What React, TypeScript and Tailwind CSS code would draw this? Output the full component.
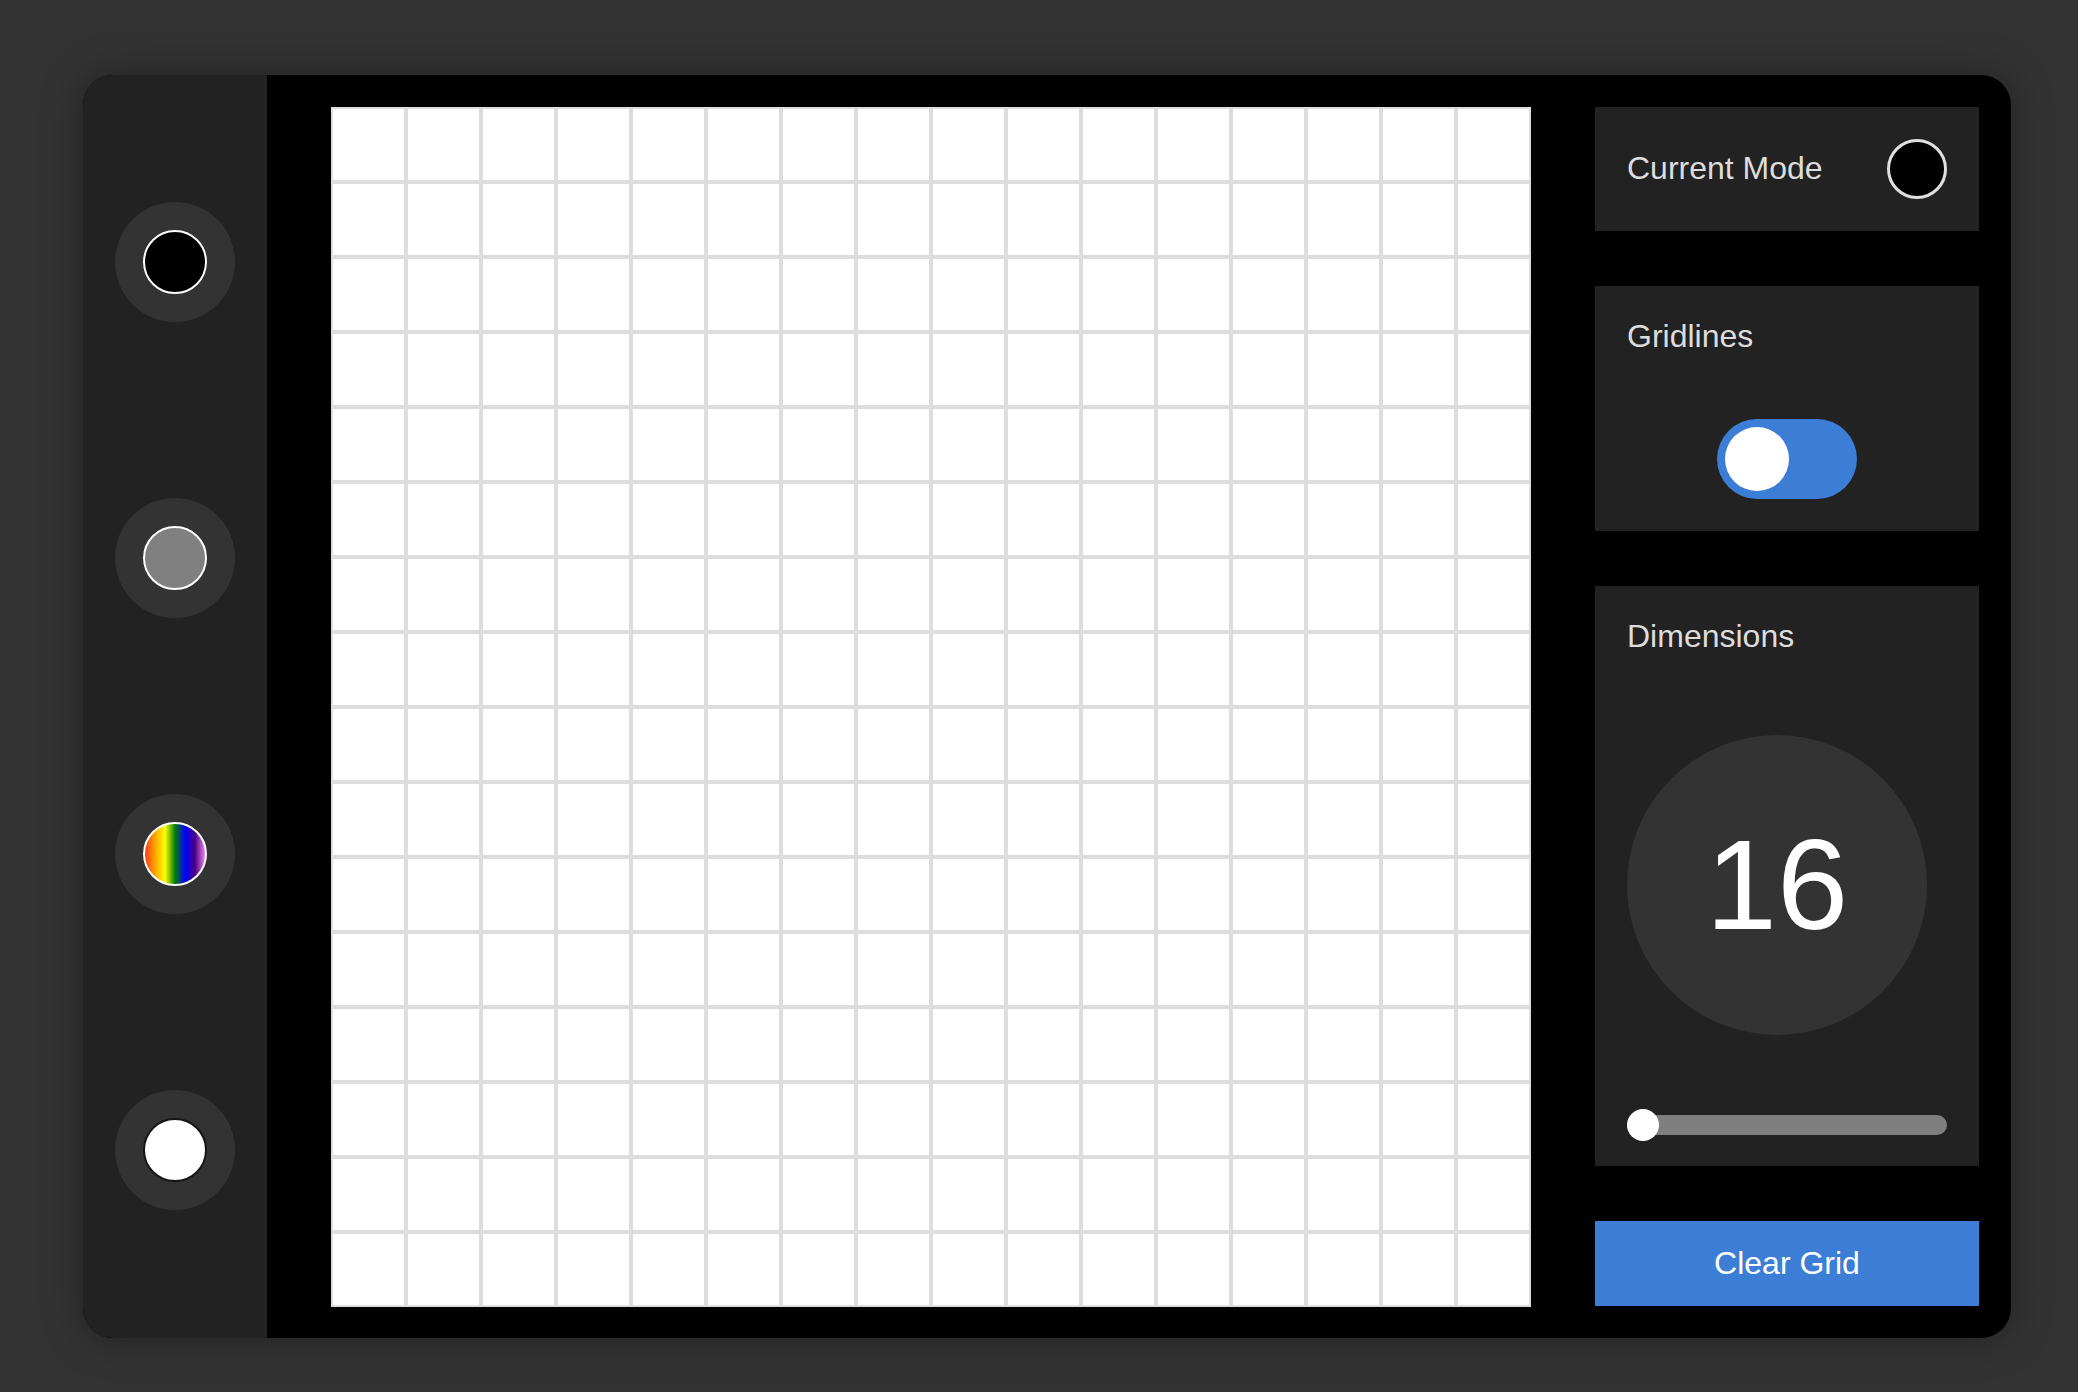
import { useState } from "react";

const COLORS = [
  { id: "black", className: "bg-black border-2 border-white" },
  { id: "gray", className: "bg-[#808080] border-2 border-white" },
  {
    id: "rainbow",
    className:
      "bg-[linear-gradient(to_right,#ff3a1a,orange,yellow,green,blue,indigo,violet)] border-2 border-white",
  },
  { id: "eraser", className: "bg-white border-2 border-[#151515]" },
];

export default function App() {
  const [size] = useState(16);
  const [gridlines, setGridlines] = useState(true);
  const cells = Array.from({ length: size * size }, (_, i) => i);

  return (
    <div className="min-h-screen bg-[#333] pt-[75px] pl-[83px] font-['Liberation_Sans',Arial,sans-serif]">
      <div className="flex w-[1928px] h-[1263px] rounded-[30px] overflow-hidden bg-black shadow-[0_0_40px_rgba(0,0,0,0.35)]">
        {/* Color picker */}
        <div className="w-[184px] bg-[#222] flex flex-col items-center pt-[127px] gap-[176px]">
          {COLORS.map((c) => (
            <button
              key={c.id}
              className="w-[120px] h-[120px] rounded-full bg-[#333] flex items-center justify-center"
            >
              <span className={`block w-[64px] h-[64px] rounded-full ${c.className}`} />
            </button>
          ))}
        </div>

        {/* Canvas + controls */}
        <div className="flex-1 flex pl-16 pr-8 py-8 gap-16">
          <div className="grid grid-cols-[repeat(16,75px)] w-[1200px] h-[1200px] bg-white">
            {cells.map((i) => (
              <div
                key={i}
                className={gridlines ? "w-[75px] h-[75px] border-2 border-[#ddd]" : "w-[75px] h-[75px]"}
              />
            ))}
          </div>

          <div className="w-[384px] flex flex-col gap-[55px] text-[#ddd]">
            <div className="h-[124px] bg-[#222] flex items-center justify-between px-8">
              <span className="text-[32px] leading-[37px]">Current Mode</span>
              <span className="w-[60px] h-[60px] rounded-full bg-black border-[3px] border-[#e0e0e0]" />
            </div>

            <div className="h-[245px] bg-[#222] px-8 pt-8">
              <p className="text-[32px] leading-[37px]">Gridlines</p>
              <div className="flex justify-center mt-16">
                <button
                  onClick={() => setGridlines(!gridlines)}
                  className="w-[140px] h-[80px] rounded-full bg-[#3c7dd5] flex items-center px-2"
                >
                  <span className="block w-[64px] h-[64px] rounded-full bg-white" />
                </button>
              </div>
            </div>

            <div className="h-[581px] bg-[#222] px-8 pt-8">
              <p className="text-[32px] leading-[37px]">Dimensions</p>
              <div className="mt-20 w-[300px] h-[300px] rounded-full bg-[#333] flex items-center justify-center">
                <span className="text-[128px] leading-none text-white">{size}</span>
              </div>
              <div className="mt-[74px] relative h-[32px] flex items-center">
                <div className="w-full h-[20px] rounded-full bg-[#7f7f7f]" />
                <span className="absolute left-0 top-0 w-[32px] h-[32px] rounded-full bg-white" />
              </div>
            </div>

            <button className="h-[85px] bg-[#3c7dd5] text-white text-[32px] leading-[37px]">
              Clear Grid
            </button>
          </div>
        </div>
      </div>
    </div>
  );
}
